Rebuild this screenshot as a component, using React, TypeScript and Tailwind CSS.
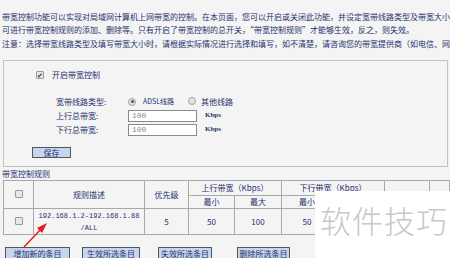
import React from 'react';

const cn = '"Noto Sans CJK SC", "Liberation Sans", sans-serif';

const Box: React.FC<{ checked?: boolean }> = ({ checked }) => (
  <span className="inline-flex items-center justify-center w-[8px] h-[8px] rounded-[1px] border border-[#9a9a9a] bg-[#e6e6e6] text-[7px] leading-none text-[#333]">
    {checked ? '✔' : ''}
  </span>
);

const Radio: React.FC<{ on?: boolean }> = ({ on }) => (
  <span className="inline-flex items-center justify-center w-[8px] h-[8px] rounded-full border border-[#a0a0a0] bg-[#e4e4e4]">
    {on && <span className="w-[3px] h-[3px] rounded-full bg-[#555]" />}
  </span>
);

const Btn: React.FC<{ label: string; w: string }> = ({ label, w }) => (
  <div className={`${w} h-[14px] flex items-center justify-center bg-[#c6d6ee] border border-[#555] text-[8px] text-[#26306e]`}>
    {label}
  </div>
);

export default function App() {
  const td = 'border border-[#a9a9a9] text-center p-0';
  return (
    <div className="relative w-[450px] h-[258px] overflow-hidden bg-[#f4f4f4] text-[#26306e]" style={{ fontFamily: cn }}>
      {/* intro text */}
      <div className="pt-[10px] pl-[2px] text-[8px] leading-[13px] whitespace-nowrap">
        <p>带宽控制功能可以实现对局域网计算机上网带宽的控制。在本页面，您可以开启或关闭此功能，并设定宽带线路类型及带宽大小，</p>
        <p>可进行带宽控制规则的添加、删除等。只有开启了带宽控制的总开关，“带宽控制规则”才能够生效，反之，则失效。</p>
        <p className="mt-[1px]">注意：选择带宽线路类型及填写带宽大小时，请根据实际情况进行选择和填写，如不清楚，请咨询您的带宽提供商（如电信、网通</p>
      </div>

      {/* settings box */}
      <div className="mt-[10px] ml-[3px] w-[445px] h-[107px] border border-[#c2c2c2] text-[8px]">
        <div className="flex items-center gap-[8px] pl-[32px] pt-[8px] h-[20px]">
          <Box checked />
          <span>开启带宽控制</span>
        </div>
        <div className="mt-[14px] pl-[52px] flex flex-col gap-[1px]">
          <div className="flex items-center h-[13px]">
            <span className="w-[72px]">宽带线路类型:</span>
            <Radio on />
            <span className="ml-[7px] text-[7px]">ADSL线路</span>
            <span className="ml-[14px]"><Radio /></span>
            <span className="ml-[5px]">其他线路</span>
          </div>
          <div className="flex items-center h-[13px]">
            <span className="w-[72px]">上行总带宽:</span>
            <div className="w-[69px] h-[12px] border border-[#8a8a8a] bg-white text-[8px] text-[#888] pl-[3px] leading-[10px]" style={{ fontFamily: '"Liberation Mono", monospace' }}>100</div>
            <span className="ml-[8px] text-[7px] font-bold" style={{ fontFamily: '"Liberation Serif", serif' }}>Kbps</span>
          </div>
          <div className="flex items-center h-[13px]">
            <span className="w-[72px]">下行总带宽:</span>
            <div className="w-[69px] h-[12px] border border-[#8a8a8a] bg-white text-[8px] text-[#888] pl-[3px] leading-[10px]" style={{ fontFamily: '"Liberation Mono", monospace' }}>100</div>
            <span className="ml-[8px] text-[7px] font-bold" style={{ fontFamily: '"Liberation Serif", serif' }}>Kbps</span>
          </div>
        </div>
        <div className="mt-[11px] ml-[28px] w-[39px] h-[11px] flex items-center justify-center bg-[#c6d6ee] border border-[#555] text-[8px]">
          保存
        </div>
      </div>

      {/* rules */}
      <div className="pl-[2px] h-[12px] mt-[1px] text-[8px] leading-[12px]">带宽控制规则</div>
      <table className="ml-[3px] border-collapse text-[8px] leading-none" style={{ width: 446, tableLayout: 'fixed' }}>
        <colgroup>
          <col style={{ width: 30 }} />
          <col style={{ width: 111 }} />
          <col style={{ width: 44 }} />
          <col style={{ width: 46 }} />
          <col style={{ width: 47 }} />
          <col style={{ width: 51 }} />
          <col style={{ width: 52 }} />
          <col style={{ width: 45 }} />
          <col style={{ width: 20 }} />
        </colgroup>
        <tbody>
          <tr className="h-[15px]">
            <td rowSpan={2} className={td}><Box /></td>
            <td rowSpan={2} className={td}>规则描述</td>
            <td rowSpan={2} className={td}>优先级</td>
            <td colSpan={2} className={td}>上行带宽（Kbps）</td>
            <td colSpan={2} className={td}>下行带宽（Kbps）</td>
            <td rowSpan={2} className={td}></td>
            <td rowSpan={2} className={td}></td>
          </tr>
          <tr className="h-[13px]">
            <td className={td}>最小</td>
            <td className={td}>最大</td>
            <td className={td}>最小</td>
            <td className={td}>最大</td>
          </tr>
          <tr className="h-[26px]">
            <td className={td}><Box /></td>
            <td className={td} style={{ fontFamily: '"Liberation Mono", monospace' }}>
              <div className="text-[7px] leading-[12px]">192.168.1.2-192.168.1.88</div>
              <div className="text-[7px] leading-[12px]">/ALL</div>
            </td>
            <td className={td}>5</td>
            <td className={td}>50</td>
            <td className={td}>100</td>
            <td className={td}>50</td>
            <td className={td}>100</td>
            <td className={td}></td>
            <td className={td}></td>
          </tr>
        </tbody>
      </table>

      <div className="flex mt-[12px] ml-[5px] text-[8px]">
        <Btn label="增加新的条目" w="w-[65px]" />
        <div className="ml-[12px]"><Btn label="生效所选条目" w="w-[58px]" /></div>
        <div className="ml-[18px]"><Btn label="失效所选条目" w="w-[54px]" /></div>
        <div className="ml-[25px]"><Btn label="删除所选条目" w="w-[53px]" /></div>
      </div>

      {/* red arrow */}
      <svg className="absolute left-0 top-0" width="450" height="258">
        <line x1="24" y1="247" x2="42" y2="228" stroke="#e02020" strokeWidth="1.5" />
        <polygon points="47,223 37,228 42,233" fill="#e02020" />
      </svg>

      {/* watermark */}
      <div className="absolute left-[315px] top-[191px] w-[135px] h-[67px] bg-white flex items-start pt-[13px] pl-[5px]">
        <span className="text-[31px] leading-none text-[#c8c8c8] tracking-[1px]" style={{ fontFamily: '"Noto Sans CJK SC", sans-serif', fontWeight: 300 }}>软件技巧</span>
      </div>
    </div>
  );
}
